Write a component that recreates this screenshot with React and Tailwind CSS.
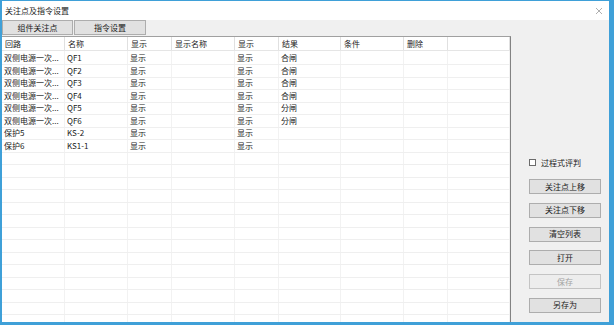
const columns = [
  { title: '回路', w: 'w-[63px]' },
  { title: '名称', w: 'w-[63px]' },
  { title: '显示', w: 'w-[44px]' },
  { title: '显示名称', w: 'w-[63px]' },
  { title: '显示', w: 'w-[44px]' },
  { title: '结果', w: 'w-[62px]' },
  { title: '条件', w: 'w-[63px]' },
  { title: '删除', w: 'w-[44px]' },
  { title: '', w: 'flex-1' }
];

const rows = [
  ['双侧电源一次...', 'QF1', '显示', '', '显示', '合闸', '', '', ''],
  ['双侧电源一次...', 'QF2', '显示', '', '显示', '合闸', '', '', ''],
  ['双侧电源一次...', 'QF3', '显示', '', '显示', '合闸', '', '', ''],
  ['双侧电源一次...', 'QF4', '显示', '', '显示', '合闸', '', '', ''],
  ['双侧电源一次...', 'QF5', '显示', '', '显示', '分闸', '', '', ''],
  ['双侧电源一次...', 'QF6', '显示', '', '显示', '分闸', '', '', ''],
  ['保护5', 'KS-2', '显示', '', '显示', '', '', '', ''],
  ['保护6', 'KS1-1', '显示', '', '显示', '', '', '', '']
];

const allRows = [...rows, ...Array.from({ length: 16 }, () => Array(9).fill(''))];

const buttons = [
  { label: '关注点上移' },
  { label: '关注点下移' },
  { label: '清空列表' },
  { label: '打开' },
  { label: '保存', disabled: true },
  { label: '另存为' }
];

export default function App() {
  return (
    <div
      className="w-[614px] h-[325px] bg-[#3fa0d8] pt-[1px] pl-[2px] pr-[5px] pb-[3px] overflow-hidden text-[8px] text-[#1a1a1a]"
      style={{ fontFamily: '"Noto Sans CJK SC", "Noto Sans", sans-serif' }}
    >
      <div className="w-full h-full flex flex-col bg-[#f0f0f0]">
        {/* title bar */}
        <div className="h-[19px] shrink-0 bg-white flex items-center justify-between pl-[3px] pr-[6px]">
          <span className="leading-none">关注点及指令设置</span>
          <svg width="8" height="8" viewBox="0 0 8 8">
            <path d="M1 1 L7 7 M7 1 L1 7" stroke="#9a9a9a" strokeWidth="0.8" fill="none" />
          </svg>
        </div>

        {/* tabs */}
        <div className="h-[16px] shrink-0 flex items-start">
          <div className="w-[71px] h-[15px] bg-[#e1e1e1] border border-[#adadad] flex items-center justify-center leading-none">
            组件关注点
          </div>
          <div className="ml-[1px] w-[72px] h-[15px] bg-[#e1e1e1] border border-[#adadad] flex items-center justify-center leading-none">
            指令设置
          </div>
        </div>

        <div className="flex flex-1 min-h-0">
          {/* table */}
          <div className="w-[509px] h-full bg-white border-t border-t-[#a0a0a0] border-r border-r-[#828282] flex flex-col overflow-hidden">
            <div className="h-[14px] shrink-0 flex border-b border-[#e5e5e5]">
              {columns.map((c, i) => (
                <div
                  key={i}
                  className={`${c.w} h-full border-r border-[#e0e0e0] pl-[3px] flex items-center leading-none whitespace-nowrap overflow-hidden`}
                >
                  {c.title}
                </div>
              ))}
            </div>
            {allRows.map((r, ri) => (
              <div
                key={ri}
                className={`${ri === 0 ? 'h-[14px]' : 'h-[12.5px]'} shrink-0 flex border-b border-[#efefef]`}
              >
                {r.map((cell, ci) => (
                  <div
                    key={ci}
                    className={`${columns[ci].w} h-full border-r border-[#f2f2f2] pl-[2px] flex items-center leading-none whitespace-nowrap overflow-hidden`}
                  >
                    {cell}
                  </div>
                ))}
              </div>
            ))}
          </div>

          {/* right panel */}
          <div className="flex-1 flex flex-col pt-[123px] pl-[18px]">
            <div className="h-[7px] flex items-center">
              <div className="w-[7px] h-[7px] bg-white border border-[#6b6b6b]" />
              <span className="ml-[5px] leading-none">过程式评判</span>
            </div>
            <div className="mt-[13px] flex flex-col gap-[8.8px]">
              {buttons.map((b) => (
                <div
                  key={b.label}
                  className={`w-[72px] h-[15px] border flex items-center justify-center leading-none ${
                    b.disabled
                      ? 'bg-[#ededed] border-[#c4c4c4] text-[#a3a3a3]'
                      : 'bg-[#e1e1e1] border-[#adadad]'
                  }`}
                >
                  {b.label}
                </div>
              ))}
            </div>
          </div>
        </div>
      </div>
    </div>
  );
}
